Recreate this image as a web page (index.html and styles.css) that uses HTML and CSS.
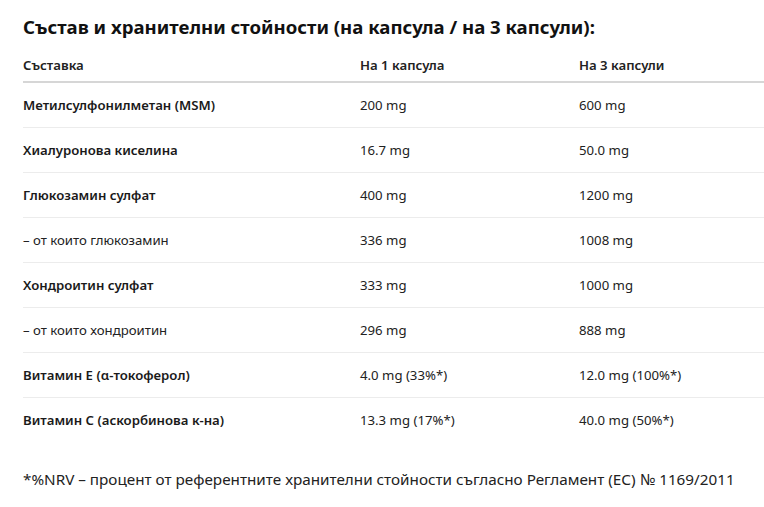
FILE: index.html
```html
<!DOCTYPE html>
<html lang="bg">
<head>
<meta charset="utf-8">
<link rel="stylesheet" href="styles.css">
</head>
<body>
<main class="page">
  <h2 class="title">Състав и хранителни стойности (на капсула / на 3 капсули):</h2>
  <table class="facts">
    <colgroup>
      <col class="c1"><col class="c2"><col class="c3">
    </colgroup>
    <thead>
      <tr><th>Съставка</th><th>На 1 капсула</th><th>На 3 капсули</th></tr>
    </thead>
    <tbody>
      <tr><td class="name">Метилсулфонилметан (MSM)</td><td>200 mg</td><td>600 mg</td></tr>
      <tr><td class="name">Хиалуронова киселина</td><td>16.7 mg</td><td>50.0 mg</td></tr>
      <tr><td class="name">Глюкозамин сулфат</td><td>400 mg</td><td>1200 mg</td></tr>
      <tr><td>– от които глюкозамин</td><td>336 mg</td><td>1008 mg</td></tr>
      <tr><td class="name">Хондроитин сулфат</td><td>333 mg</td><td>1000 mg</td></tr>
      <tr><td>– от които хондроитин</td><td>296 mg</td><td>888 mg</td></tr>
      <tr><td class="name">Витамин E (α-токоферол)</td><td>4.0 mg (33%*)</td><td>12.0 mg (100%*)</td></tr>
      <tr><td class="name">Витамин C (аскорбинова к-на)</td><td>13.3 mg (17%*)</td><td>40.0 mg (50%*)</td></tr>
    </tbody>
  </table>
  <p class="note">*%NRV – процент от референтните хранителни стойности съгласно Регламент (ЕС) № 1169/2011</p>
</main>
</body>
</html>
```
FILE: styles.css
```css
html, body {
  margin: 0;
  padding: 0;
  background: #fff;
}
body {
  font-family: "Noto Sans", "Open Sans", sans-serif;
  color: #222;
}
.page {
  padding: 12px 0 0 23px;
}
.title {
  margin: 0;
  font-size: 18.6px;
  line-height: 30px;
  font-weight: 700;
  color: #111;
}
.facts {
  width: 741px;
  border-collapse: collapse;
  table-layout: fixed;
  margin-top: 8px;
}
.c1 { width: 337px; }
.c2 { width: 219px; }
.c3 { width: 185px; }
.facts th {
  text-align: left;
  font-size: 13.2px;
  font-weight: 600;
  line-height: 19px;
  padding: 6px 0 6px 0;
  border-bottom: 2px solid #d6d6d6;
  color: #222;
}
.facts td {
  font-size: 13.2px;
  line-height: 19px;
  padding: 13px 0 12px 0;
  border-bottom: 1px solid #ececec;
  color: #222;
}
.facts tbody tr:last-child td {
  border-bottom: none;
}
.facts td.name {
  font-weight: 600;
  color: #1a1a1a;
}
.note {
  margin: 26px 0 0;
  font-size: 15.25px;
  line-height: 22px;
  color: #222;
}
```
